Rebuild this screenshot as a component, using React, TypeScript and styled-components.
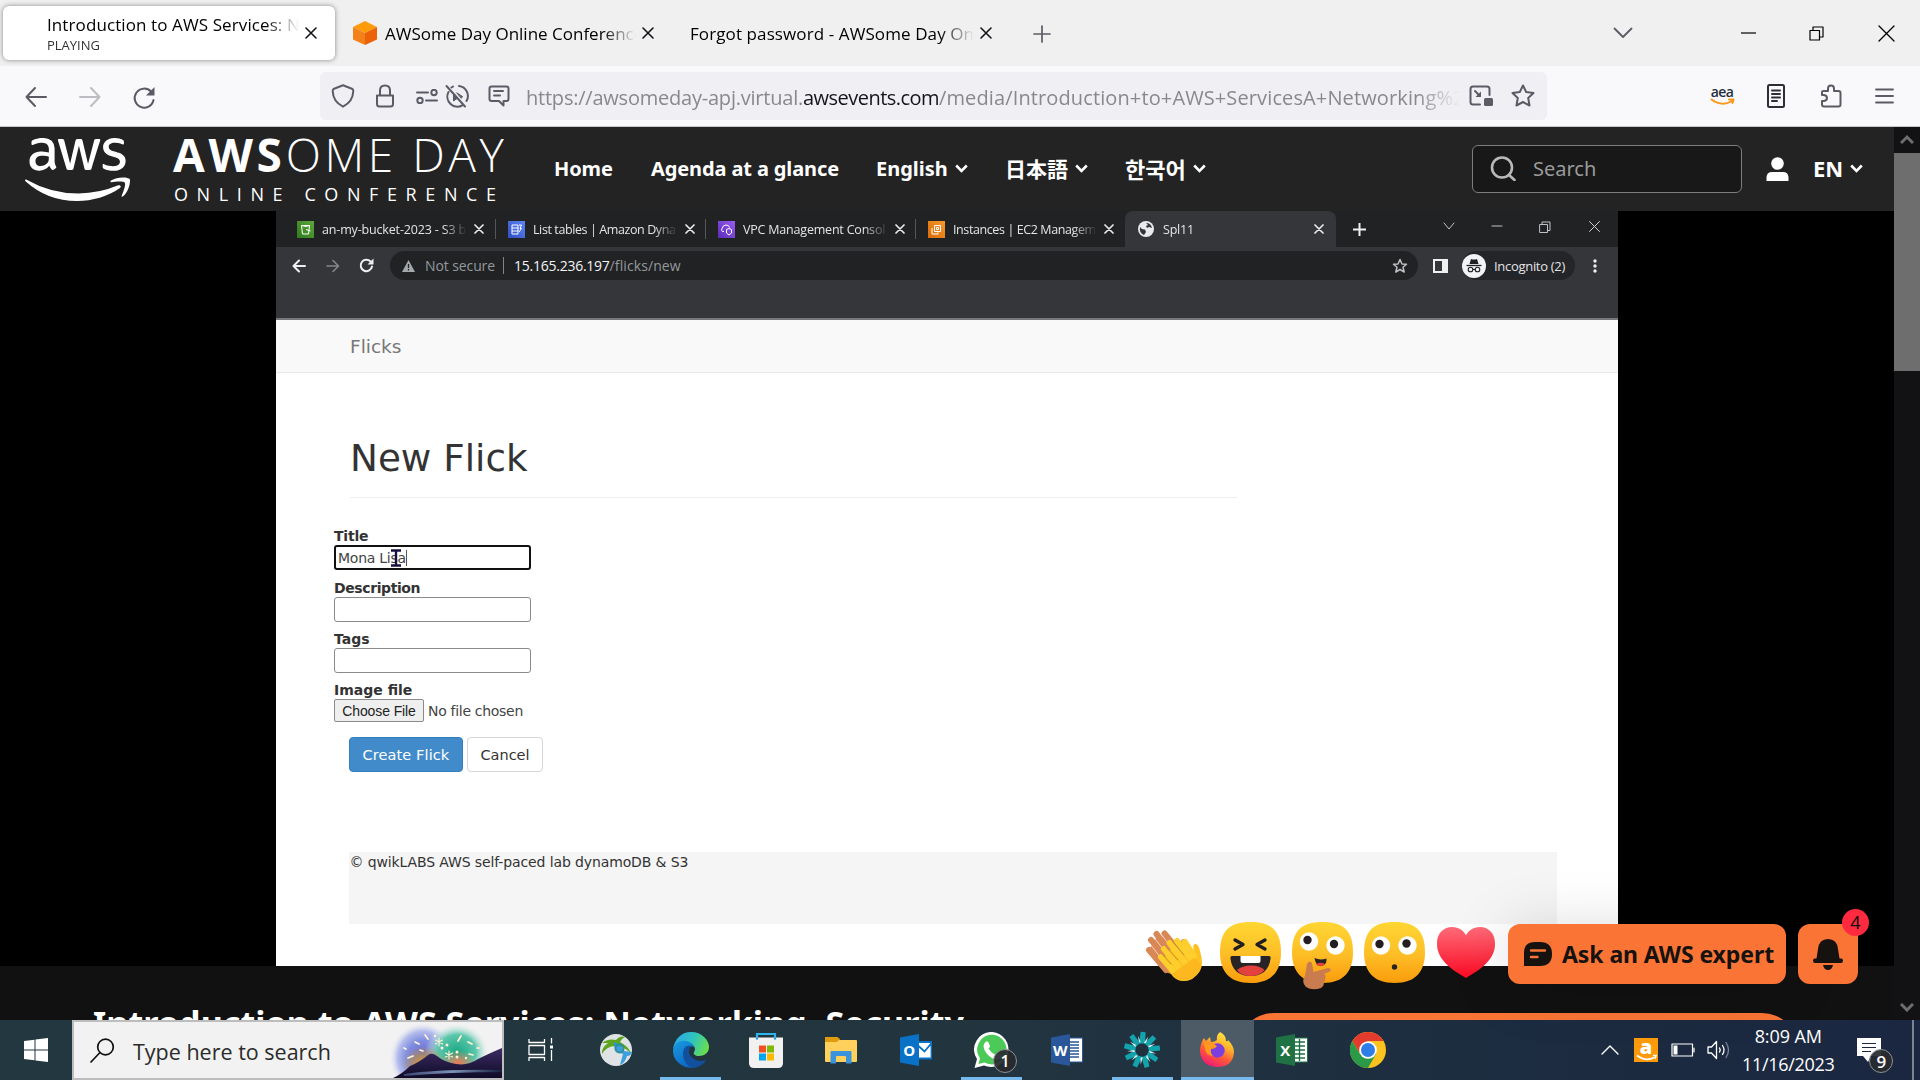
import React from 'react';
import styled, { createGlobalStyle, css } from 'styled-components';
import { FaAws } from 'react-icons/fa';

const ui = `"Open Sans", "Noto Sans", sans-serif`;
const ember = `"Noto Sans", "Open Sans", "Noto Sans CJK JP", "Noto Sans CJK KR", sans-serif`;
const verdana = `"DejaVu Sans", sans-serif`;

const Global = createGlobalStyle`
  * { box-sizing: border-box; }
  html, body { margin: 0; padding: 0; background: #111; overflow: hidden; }
  svg { display: block; flex: none; }
`;

const Screen = styled.div`
  position: relative;
  display: flex;
  flex-direction: column;
  width: 1920px;
  height: 1080px;
  overflow: hidden;
  font-family: ${ui};
`;

const Text = styled.span<{ $size: number; $ls?: number; $color?: string; $weight?: number; $font?: string }>`
  display: block;
  flex: none;
  white-space: nowrap;
  font-family: ${(p) => p.$font ?? ui};
  font-size: ${(p) => p.$size}px;
  letter-spacing: ${(p) => p.$ls ?? 0}px;
  color: ${(p) => p.$color ?? '#000'};
  font-weight: ${(p) => p.$weight ?? 400};
`;

/* Width-limited text that fades out on its right edge. */
const Fade = styled.div<{ $w: number; $fade: number }>`
  flex: none;
  width: ${(p) => p.$w}px;
  overflow: hidden;
  mask-image: linear-gradient(to left, transparent, #000 ${(p) => p.$fade}px);
`;

const IconCell = styled.div<{ $w: number; $ml?: number; $pt?: number }>`
  flex: none;
  display: flex;
  align-items: center;
  justify-content: center;
  width: ${(p) => p.$w}px;
  margin-left: ${(p) => p.$ml ?? 0}px;
  padding-top: ${(p) => p.$pt ?? 0}px;
`;

/* ---------- Firefox chrome ---------- */

const TabStrip = styled.div`
  flex: none;
  display: flex;
  align-items: center;
  height: 66px;
  background: #f0f0f0;
`;

const FxTab = styled.div<{ $active?: boolean; $ml: number; $pl: number }>`
  flex: none;
  display: flex;
  align-items: center;
  height: 54px;
  margin-left: ${(p) => p.$ml}px;
  padding-left: ${(p) => p.$pl}px;
  border-radius: 6px;
  ${(p) =>
    p.$active &&
    css`
      width: 332px;
      background: #fff;
      box-shadow: 0 0 5px rgba(0, 0, 0, 0.45);
    `}
`;

const TabLines = styled.div`
  display: flex;
  flex-direction: column;
  & > *:first-child { line-height: 24px; margin-top: -1px; }
  & > *:last-child { line-height: 16px; }
`;

const FxToolbar = styled.div`
  flex: none;
  display: flex;
  align-items: center;
  height: 61px;
  background: #f9f9fb;
  border-bottom: 1px solid #c4c8c8;
`;

const UrlBar = styled.div`
  flex: none;
  display: flex;
  align-items: center;
  width: 1227px;
  height: 48px;
  margin-left: 164px;
  border-radius: 6px;
  background: #f0f0f4;
`;

const UrlText = styled.div`
  display: flex;
  padding-top: 3px;
  line-height: 30px;
`;

const AeaMark = styled.div`
  display: flex;
  flex-direction: column;
  align-items: center;
  padding-bottom: 1px;
  span { line-height: 12px; }
`;

/* ---------- AWS page ---------- */

const PageArea = styled.div`
  flex: none;
  display: flex;
  height: 893px;
`;

const Page = styled.main`
  display: flex;
  flex-direction: column;
  width: 1894px;
  overflow: hidden;
  background: #000;
`;

const ScrollTrack = styled.div`
  display: flex;
  flex-direction: column;
  justify-content: space-between;
  width: 26px;
  background: #121215;
`;

const ScrollEnd = styled.div`
  display: flex;
  align-items: center;
  justify-content: center;
  height: 26px;
`;

const ScrollThumb = styled.div`
  height: 218px;
  margin-bottom: auto;
  background: #6e6e6e;
`;

const SiteHeader = styled.header`
  flex: none;
  display: flex;
  align-items: center;
  height: 84px;
  background: #232323;
`;

const Wordmark = styled.div`
  display: flex;
  flex-direction: column;
  gap: 4px;
  width: 380px;
  margin-left: 43px;
  padding-bottom: 5px;
`;

const WordTop = styled.div`
  display: flex;
  height: 50px;
  line-height: 50px;
`;

const WordBottom = styled.div`
  height: 22px;
  padding-left: 1px;
  line-height: 22px;
`;

const NavItem = styled.a<{ $w: number; $ml: number }>`
  flex: none;
  display: flex;
  align-items: center;
  gap: 7px;
  width: ${(p) => p.$w}px;
  margin-left: ${(p) => p.$ml}px;
  padding-bottom: 2px;
  color: #fff;
`;

const SearchBox = styled.div`
  flex: none;
  display: flex;
  align-items: center;
  gap: 17px;
  width: 270px;
  height: 48px;
  margin-left: 264px;
  padding: 0 0 2px 17px;
  border: 1px solid #7d7d7d;
  border-radius: 6px;
  background: #181818;
`;

const VideoStage = styled.section`
  flex: none;
  display: flex;
  height: 755px;
  padding-left: 276px;
  background: #000;
`;

const Video = styled.div`
  display: flex;
  flex-direction: column;
  width: 1342px;
  background: #fff;
`;

const BelowVideo = styled.section`
  flex: 1;
  display: flex;
  align-items: flex-start;
  overflow: hidden;
  background: #111;
`;

const SessionTitle = styled.div`
  width: 1144px;
  padding: 34px 0 0 93px;
  line-height: 46px;
`;

const SessionButton = styled.div`
  flex: none;
  width: 560px;
  height: 72px;
  margin: 47px 0 0 94px;
  border-radius: 36px;
  background: #fa7535;
`;

/* ---------- Video contents: Chrome window ---------- */

const CrTabs = styled.div`
  flex: none;
  display: flex;
  align-items: center;
  height: 36px;
  padding-left: 9px;
  background: #202224;
`;

const CrTab = styled.div<{ $w: number }>`
  flex: none;
  display: flex;
  align-items: center;
  width: ${(p) => p.$w}px;
  height: 100%;
  padding-left: 12px;
`;

const CrSeparator = styled.div<{ $hide?: boolean }>`
  width: 1px;
  height: 20px;
  margin-left: auto;
  background: ${(p) => (p.$hide ? 'transparent' : '#55575a')};
`;

const CrActiveTab = styled.div`
  flex: none;
  display: flex;
  align-items: center;
  width: 211px;
  height: 100%;
  padding-left: 13px;
  border-radius: 8px 8px 0 0;
  background: #35363a;
`;

const CrToolbar = styled.div`
  flex: none;
  display: flex;
  align-items: flex-start;
  height: 73px;
  padding-top: 4px;
  background: #35363a;
  border-bottom: 2px solid #77787a;
  & > * { height: 29px; }
`;

const Omnibox = styled.div`
  flex: none;
  display: flex;
  align-items: center;
  width: 1028px;
  margin-left: 12px;
  border-radius: 15px;
  background: #202224;
`;

const OmniDivider = styled.div`
  width: 1px;
  height: 17px;
  margin: 0 10px 0 8px;
  background: #808387;
`;

const IncognitoChip = styled.div`
  flex: none;
  display: flex;
  align-items: center;
  gap: 8px;
  width: 113px;
  margin-left: 14px;
  border-radius: 15px;
  background: #242528;
`;

const FlicksBar = styled.div`
  flex: none;
  height: 53px;
  padding-left: 74px;
  line-height: 53px;
  background: #f9f9f9;
  border-bottom: 1px solid #e9e9e9;
`;

const FlickBody = styled.div`
  display: flex;
  flex-direction: column;
  padding-left: 58px;
`;

const FlickHeading = styled.h1`
  width: 887px;
  height: 125px;
  margin: 0 0 28px 16px;
  padding-top: 60px;
  border-bottom: 1px solid #eee;
  font: inherit;
  line-height: 50px;
`;

const FieldGroup = styled.label<{ $h: number }>`
  display: flex;
  flex-direction: column;
  height: ${(p) => p.$h}px;
  line-height: 20px;
`;

const FieldBox = styled.div<{ $focus?: boolean }>`
  display: flex;
  align-items: center;
  width: 197px;
  height: 25px;
  margin-top: -1px;
  padding-left: 2px;
  border: ${(p) => (p.$focus ? '2px solid #111' : '1px solid #8a8a8a')};
  border-radius: 3px;
`;

const Caret = styled.i`
  width: 1px;
  height: 16px;
  background: #555;
`;

const CursorMark = styled.div`
  position: relative;
  width: 0;
  svg { position: absolute; left: -17px; top: -9px; }
`;

const FileRow = styled.div`
  display: flex;
  align-items: center;
  gap: 4px;
  margin-top: -1px;
`;

const FileButton = styled.div`
  display: flex;
  align-items: center;
  justify-content: center;
  width: 90px;
  height: 23px;
  border: 1px solid #8b8b8b;
  border-radius: 2px;
  background: #efefef;
`;

const FormActions = styled.div`
  display: flex;
  gap: 4px;
  margin-left: 15px;
`;

const FormButton = styled.div<{ $primary?: boolean; $w: number }>`
  display: flex;
  align-items: center;
  justify-content: center;
  width: ${(p) => p.$w}px;
  height: 35px;
  border: 1px solid ${(p) => (p.$primary ? '#357ebd' : '#d6d6d6')};
  border-radius: 4px;
  background: ${(p) => (p.$primary ? '#428bca' : '#fff')};
`;

const FlickFooter = styled.footer`
  width: 1208px;
  height: 72px;
  margin: 80px 0 0 15px;
  padding-left: 0.5px;
  background: #f5f5f5;
  line-height: 20px;
`;

/* ---------- Floating reactions ---------- */

const Reactions = styled.div`
  position: absolute;
  left: 1144px;
  top: 922px;
  display: flex;
  align-items: flex-start;
`;

const Reaction = styled.div<{ $w: number; $ml: number }>`
  width: ${(p) => p.$w}px;
  margin-left: ${(p) => p.$ml}px;
`;

const AskButton = styled.div`
  display: flex;
  align-items: center;
  gap: 10px;
  width: 278px;
  height: 60px;
  margin: 2px 0 0 12px;
  padding-left: 16px;
  border-radius: 12px;
  background: #fa7535;
  box-shadow: 0 4px 60px rgba(0, 0, 0, 0.15);
`;

const BellButton = styled.div`
  position: relative;
  display: flex;
  align-items: center;
  justify-content: center;
  width: 60px;
  height: 60px;
  margin: 2px 0 0 12px;
  border-radius: 12px;
  background: #fa7535;
`;

const BellBadge = styled.div`
  position: absolute;
  right: -11px;
  top: -15px;
  width: 27px;
  height: 27px;
  border-radius: 50%;
  background: #ff2a3f;
  line-height: 27px;
  text-align: center;
`;

/* ---------- Windows taskbar ---------- */

const Taskbar = styled.div`
  flex: none;
  display: flex;
  height: 60px;
  background: linear-gradient(90deg, #22373f 0%, #22353f 50%, #1d2d40 75%, #1b2741 100%);
`;

const StartButton = styled.div`
  display: flex;
  align-items: center;
  justify-content: center;
  width: 72px;
`;

const TaskSearch = styled.div`
  flex: none;
  display: flex;
  align-items: center;
  width: 432px;
  border: 2px solid #bdbdbd;
  background: #f2f2f2;
  padding-left: 16px;
`;

const SearchHint = styled.div`
  width: 259px;
  margin-left: 18px;
  padding-top: 2px;
`;

const TaskItem = styled.div<{ $active?: boolean; $running?: boolean }>`
  flex: none;
  position: relative;
  display: flex;
  align-items: center;
  justify-content: center;
  width: 73px;
  margin-right: 2.2px;
  background: ${(p) => (p.$active ? '#4d5b66' : 'transparent')};
  box-shadow: ${(p) => (p.$active ? 'inset 0 -3px #76b9ed' : 'none')};
  &::after {
    content: '';
    display: ${(p) => (p.$running ? 'block' : 'none')};
    position: absolute;
    left: 6px;
    right: 6px;
    bottom: 0;
    height: 3px;
    background: #76b9ed;
  }
`;

const CountBadge = styled.div<{ $x: number; $y: number }>`
  position: absolute;
  left: ${(p) => p.$x}px;
  top: ${(p) => p.$y}px;
  display: flex;
  align-items: center;
  justify-content: center;
  width: 24px;
  height: 24px;
  border: 1px solid #8d9194;
  border-radius: 50%;
  background: rgba(40, 43, 46, 0.93);
`;

const Clock = styled.div`
  display: flex;
  flex-direction: column;
  align-items: center;
  width: 110px;
  margin-left: 2px;
  padding-top: 2px;
  line-height: 28px;
`;

const Notifications = styled.div`
  position: relative;
  width: 24px;
  margin: 18px 0 0 14px;
`;

const ShowDesktop = styled.div`
  width: 8px;
  margin-left: auto;
  border-left: 2px solid #7b8290;
`;

/* ---------- Icons ---------- */

type StrokeProps = { w: number; h?: number; c?: string; sw?: number; children: React.ReactNode; cap?: 'round' | 'butt' };
const Ico = ({ w, h = w, c = '#5b5b66', sw = 2, children, cap = 'round' }: StrokeProps) => (
  <svg width={w} height={h} viewBox={`0 0 ${w} ${h}`} fill="none" stroke={c} strokeWidth={sw} strokeLinecap={cap} strokeLinejoin="round">
    {children}
  </svg>
);

const CloseX = ({ s = 12, c = '#15141a', sw = 1.6 }: { s?: number; c?: string; sw?: number }) => (
  <Ico w={s} c={c} sw={sw}><path d={`M1 1L${s - 1} ${s - 1}M${s - 1} 1L1 ${s - 1}`} /></Ico>
);

const MenuCaret = () => <Ico w={13} h={9} c="#fff" sw={2.6} cap="butt"><path d="M1.2 1.5L6.5 6.8L11.8 1.5" strokeLinejoin="miter" /></Ico>;

const AwsCube = () => (
  <svg width="24" height="24" viewBox="0 0 24 24">
    <path d="M12 0L24 6L12 12L0 6Z" fill="#ff9a0a" />
    <path d="M0 6L12 12V24L0 18.5Z" fill="#f4801a" />
    <path d="M24 6L12 12V24L24 18.5Z" fill="#ec6208" />
  </svg>
);

const Service = ({ a, b, children }: { a: string; b: string; children: React.ReactNode }) => (
  <svg width="17" height="17" viewBox="0 0 17 17" fill="none" stroke="#fff" strokeWidth="1" strokeLinejoin="round">
    <defs>
      <linearGradient id={`g${a.slice(1)}`} x1="0" y1="1" x2="1" y2="0"><stop stopColor={a} /><stop offset="1" stopColor={b} /></linearGradient>
    </defs>
    <rect width="17" height="17" fill={`url(#g${a.slice(1)})`} stroke="none" />
    {children}
  </svg>
);

const Clap = () => (
  <svg width="60" height="61" viewBox="0 0 60 61">
    <path d="M6 26L12 16L24 14L38 30L30 52Q22 52 18 46Z" fill="#d98855" />
    <g stroke="#d98855" strokeWidth="6" strokeLinecap="round">
      <path d="M20.500 11.500L34 28M12.500 12L32 36M7 18L24 38M5 28L22 48M40 20L42 28" />
    </g>
    <g stroke="#fff" strokeWidth="0.900" strokeLinecap="round" opacity="0.700"><path d="M16 11L28 26M9.500 15L23 32M6 22L17 36" /></g>
    <path d="M30 22L48 37Q51 34 49.500 27Q48.500 22 51.500 22Q54.500 22 56 29Q60 42 56 49Q49 60 38 59Q31 58 27 52L18 40Z" fill="#fdc120" />
    <g stroke="#fdce2c" strokeWidth="6" strokeLinecap="round">
      <path d="M41 20L50 34M33 19L48 38M25.500 21L42 42M20 27L36 47M17 35L32 52" />
    </g>
    <path d="M28 52L50 36L57 42Q57 47 54 51Q47 59 39 59Q32 58 28 52Z" fill="#fcb81e" />
    <g stroke="#c98a2c" strokeWidth="1" strokeLinecap="round"><path d="M29 20L40 33M22 25L34 38M17 31L27 42" /></g>
  </svg>
);

const FacePath = 'M30.500 0C52 0 61 9 61 30.500C61 49 52 61 30.500 61C9 61 0 49 0 30.500C0 9 9 0 30.500 0Z';
const FaceGradient = ({ id }: { id: string }) => (
  <defs><linearGradient id={id} x1="0" y1="0" x2="0" y2="1"><stop stopColor="#ffd632" /><stop offset="0.500" stopColor="#fdc028" /><stop offset="1" stopColor="#fb9c0c" /></linearGradient></defs>
);

const Laugh = () => (
  <svg width="61" height="61" viewBox="0 0 61 61">
    <FaceGradient id="f1" />
    <path d={FacePath} fill="url(#f1)" />
    <path d="M15 18L23 22.500L15 27M45 18L37 22.500L45 27" fill="none" stroke="#231f20" strokeWidth="3.400" strokeLinecap="round" strokeLinejoin="round" />
    <path d="M12 34H49Q51 34 50.500 37Q48 54 30.500 54Q13 54 10.500 37Q10 34 12 34Z" fill="#282324" />
    <path d="M17 48Q22 43.500 31 43.500Q40 43.500 44.500 48Q40 54 30.500 54Q21 54 17 48Z" fill="#e2413f" />
    <path d="M20.500 34H40.500V39Q40.500 41 38.500 41H22.500Q20.500 41 20.500 39Z" fill="#fff" />
  </svg>
);

const Think = () => (
  <svg width="61" height="68" viewBox="0 0 61 68">
    <FaceGradient id="f2" />
    <path d={FacePath} fill="url(#f2)" />
    <circle cx="17" cy="19.500" r="9.200" fill="#fff" /><circle cx="15.500" cy="18" r="4.200" fill="#231f20" />
    <circle cx="43.500" cy="23.500" r="9.200" fill="#fff" /><circle cx="42" cy="22" r="4.200" fill="#231f20" />
    <path d="M22.500 36Q28 38.500 34.500 36.500Q35 44 28 44Q23.500 43 22.500 36Z" fill="#282324" />
    <path d="M24 42Q29 39.500 33 42Q31 44.500 28 44.300Q25 44 24 42Z" fill="#e2413f" />
    <path d="M15 42Q17 38 20 41L21.500 50L36 46Q40 46 38 49.500L32 52Q35 54 33 56Q34 59 31.500 60Q33 63 29 66Q20 69 14 65Q9 60 13 54Z" fill="#c97c4e" />
  </svg>
);

const Hush = () => (
  <svg width="61" height="61" viewBox="0 0 61 61">
    <FaceGradient id="f3" />
    <path d={FacePath} fill="url(#f3)" />
    <circle cx="17" cy="23.500" r="9.200" fill="#fff" /><circle cx="15.500" cy="22" r="4.200" fill="#231f20" />
    <circle cx="43.500" cy="23.500" r="9.200" fill="#fff" /><circle cx="42.500" cy="21.500" r="4.200" fill="#231f20" />
    <circle cx="30.500" cy="45" r="2.700" fill="#282324" />
  </svg>
);

const Heart = () => (
  <svg width="60" height="61" viewBox="0 0 60 61">
    <defs><linearGradient id="hg" x1="0" y1="0" x2="0" y2="1"><stop stopColor="#ff6a78" /><stop offset="1" stopColor="#fb0a22" /></linearGradient></defs>
    <path d="M30 56C22 51 0 40 1 21C1 11 8 5 16 5C23 5 28 9 30 13.500C32 9 37 5 44 5C52 5 59 11 59 21C60 40 38 51 30 56Z" fill="url(#hg)" />
  </svg>
);

const Fireworks = () => (
  <svg width="112" height="56" viewBox="0 0 112 56">
    <defs>
      <radialGradient id="w1"><stop stopColor="#5a5fd0" /><stop offset="0.500" stopColor="#8290e0" /><stop offset="0.750" stopColor="#b4bdec" /><stop offset="1" stopColor="#f2f2f2" stopOpacity="0" /></radialGradient>
      <radialGradient id="w2"><stop stopColor="#1aa884" /><stop offset="0.600" stopColor="#5cc7ac" /><stop offset="1" stopColor="#f2f2f2" stopOpacity="0" /></radialGradient>
      <radialGradient id="w3"><stop stopColor="#d09a45" /><stop offset="0.400" stopColor="#c8963f" stopOpacity="0.800" /><stop offset="1" stopColor="#c8963f" stopOpacity="0" /></radialGradient>
      <radialGradient id="w6"><stop stopColor="#f07a55" /><stop offset="1" stopColor="#f07a55" stopOpacity="0" /></radialGradient>
      <linearGradient id="w4" x1="0" y1="0" x2="0" y2="1"><stop stopColor="#3d2c63" /><stop offset="1" stopColor="#0e0b28" /></linearGradient>
      <linearGradient id="w5"><stop stopColor="#3a4470" /><stop offset="0.500" stopColor="#7f93b8" /><stop offset="1" stopColor="#14203f" /></linearGradient>
    </defs>
    <ellipse cx="33" cy="36" rx="34" ry="36" fill="url(#w1)" />
    <ellipse cx="67" cy="30" rx="32" ry="29" fill="url(#w2)" />
    <ellipse cx="34" cy="42" rx="22" ry="18" fill="url(#w3)" />
    <ellipse cx="68" cy="41" rx="18" ry="13" fill="url(#w6)" />
    <path d="M3 56Q12 52 20 44Q30 40 38 33Q42 30 47 34Q54 40 66 42Q78 44 88 37Q98 32 112 26V56Z" fill="url(#w4)" />
    <path d="M14 52Q50 47 112 48V50Q60 50 14 54Z" fill="url(#w5)" />
    <g stroke="#fff3d8" strokeWidth="1.700" strokeLinecap="round">
      <path d="M35 13L38 17M25 20L29 22M14 26L16 27M30 28L33 29M18 36L23 34M71 14L68 19M78 20L82 22M87 26L89 26M79 32L83 33" />
      <path d="M59 29V37M55.500 31L62.500 35M62.500 31L55.500 35M49 16V24M45.500 18L52.500 22M52.500 18L45.500 22" strokeWidth="1.100" />
    </g>
    <g fill="#fff3d8"><circle cx="57" cy="23" r="1.500" /><circle cx="52" cy="26" r="1.500" /><circle cx="67" cy="30" r="1.500" /><circle cx="67" cy="35" r="1.500" /><circle cx="76" cy="36" r="1.200" /><circle cx="45" cy="14" r="1.200" /></g>
  </svg>
);

const TaskView = () => (
  <Ico w={25} h={24} c="#fff" sw={1.3} cap="butt"><path d="M1 1V4.500H16.500V1M1 7.500H16.500V16.500H1ZM1 23V19.500H16.500V23M23.500 0V5.500M23.500 12V23" /><path d="M22 7.500h3v3h-3z" fill="#fff" stroke="none" /></Ico>
);

const AnyConnect = () => (
  <svg width="32" height="32" viewBox="0 0 32 32">
    <circle cx="16" cy="16" r="16" fill="#dfe3e6" />
    <path d="M2 9Q8 4 16 6Q20 1 25 3Q21 5 20 8Q28 12 31 19Q22 11 15 12Q7 12 2 20Q1 14 8 9Z" fill="#5da51f" />
    <path d="M14 12Q15 18 23 20L20 31Q25 29 27 22Q31 22 32 18L24 17Q21 10 14 8Z" fill="#2b97dc" opacity="0.900" />
    <circle cx="19.500" cy="14.500" r="4" fill="none" stroke="#2d8f9c" strokeWidth="2" />
  </svg>
);

const Edge = () => (
  <svg width="36" height="36" viewBox="0 0 36 36">
    <defs>
      <linearGradient id="e1" x1="0" y1="0.300" x2="1" y2="0.600"><stop stopColor="#2ba9e8" /><stop offset="0.500" stopColor="#2ec3c0" /><stop offset="1" stopColor="#6be04a" /></linearGradient>
      <linearGradient id="e2" x1="0" y1="0" x2="0.600" y2="1"><stop stopColor="#1a9be0" /><stop offset="1" stopColor="#0a66c4" /></linearGradient>
    </defs>
    <path d="M0 17C2 6 9 0 18 0C29 0 36 8 36 15C36 21 31 24 26 24C22 24 20 22 21 20C23 18 22 13 17 11C10 8 3 12 0 17Z" fill="url(#e1)" />
    <path d="M0 18C1 11 7 8 13 9C18 10 21 13 21 15C17 12 12 19 14 26C16 32 22 35 25 34.500C20 37 12 36 7 32C2 28 0 24 0 18Z" fill="url(#e2)" />
    <path d="M11 17C8 24 12 34 20 35.800C26 35.500 31 32 33.500 27.500C28 31 18 28 16 21C15.500 18 17 15 18.500 14C15 13 12 14 11 17Z" fill="#124f9c" />
  </svg>
);

const Store = () => (
  <svg width="36" height="36" viewBox="0 0 36 36">
    <path d="M9 7V2H27V7" fill="none" stroke="#2bb4ee" strokeWidth="2.200" />
    <path d="M1 5.500H35V31Q35 36 30 36H6Q1 36 1 31Z" fill="#f1f1f1" />
    <path d="M9 5.500V7.500M27 5.500V7.500" stroke="#1590d8" strokeWidth="2.200" />
    <path fill="#f25022" d="M11 13.500h7v7h-7z" /><path fill="#7fba00" d="M19 13.500h7v7h-7z" /><path fill="#00a4ef" d="M11 21.500h7v7h-7z" /><path fill="#ffb900" d="M19 21.500h7v7h-7z" />
  </svg>
);

const Explorer = () => (
  <svg width="32" height="27" viewBox="0 0 32 27">
    <path d="M0 1Q0 0 1 0H12L15 3H31Q32 3 32 4V24Q32 25 31 25H1Q0 25 0 24Z" fill="#ffd15c" />
    <path d="M0 1Q0 0 1 0H12L15 2L12 5H0Z" fill="#e09b0a" />
    <path d="M5.500 26.500V15Q5.500 14 6.500 14H25.500Q26.500 14 26.500 15V26.500H21V20Q21 19 20 19H12Q11 19 11 20V26.500Z" fill="#3a94dc" />
  </svg>
);

const OfficeIcon = ({ letter, c, side }: { letter: string; c: string; side: React.ReactNode }) => (
  <svg width="32" height="32" viewBox="0 0 32 32">
    {side}
    <path d="M0 3.500L19 0V32L0 28.500Z" fill={c} />
    <text x="9.300" y="21.500" textAnchor="middle" fontFamily="Open Sans, sans-serif" fontWeight="700" fontSize="15" fill="#fff">{letter}</text>
  </svg>
);

const WhatsApp = () => (
  <svg width="36" height="36" viewBox="0 0 36 36">
    <path d="M18.500 0A17.500 17.500 0 1 1 10 33.500L0.500 36L3 27A17.500 17.500 0 0 1 18.500 0Z" fill="#fff" />
    <path d="M18.500 2.800A14.800 14.800 0 1 1 10.500 30.500L4.500 32L6 26.300A14.800 14.800 0 0 1 18.500 2.800Z" fill="#4bca58" />
    <path d="M12 9.500Q14 9 14.500 10.500L16 14Q16 15 14.500 16.500Q17 21 21.500 23Q23 21 24 21.200L27.500 23Q28 27 23.500 27.500Q18 27.500 13 22Q9.500 18 9.500 14Q9.800 11 12 9.500Z" fill="#fff" />
  </svg>
);

const Burst = () => (
  <svg width="38" height="38" viewBox="-19 -19 38 38">
    {[0, 1, 2, 3, 4, 5, 6, 7, 8].map((i) => (
      <g key={i} transform={`rotate(${i * 40 + 4})`}>
        <path d="M-3.200 -6L-2.600 -18H2.400L2.600 -7Z" fill="#12a3ad" />
        <path d="M-3.500 -6L-4.800 -14L-2 -8Z" fill="#e8f4f4" />
      </g>
    ))}
  </svg>
);

const Firefox = () => (
  <svg width="34" height="36" viewBox="0 0 34 36">
    <defs>
      <linearGradient id="x1" x1="0.800" y1="0" x2="0.300" y2="1"><stop stopColor="#fff04a" /><stop offset="0.350" stopColor="#ffb52b" /><stop offset="0.650" stopColor="#ff5a36" /><stop offset="1" stopColor="#f0197a" /></linearGradient>
    </defs>
    <path d="M20 0Q26 3 26 9Q28 10 28 8Q34 14 34 20Q33 35 17 35Q1 34 0 19Q0 12 4 6L6 9L10 5L11 10Q15 10 17 8Q16 3 20 0Z" fill="url(#x1)" />
    <circle cx="17.500" cy="18.500" r="7.200" fill="#7b3fe0" />
    <path d="M4 11Q11 9 17 14Q15 17 11 17Q10 21 13 24Q5 23 5 16Z" fill="#ff9a1f" />
  </svg>
);

const Chrome = () => (
  <svg width="36" height="36" viewBox="0 0 36 36">
    <circle cx="18" cy="18" r="18" fill="#fcc31e" />
    <path d="M18 18V9H33.600A18 18 0 0 0 2.400 9L9 20Z" fill="#e33b2e" />
    <path d="M2.400 9A18 18 0 0 0 18 36L26 22L18 18L10 22Z" fill="#2a9a48" />
    <circle cx="18" cy="18" r="8.800" fill="#fff" /><circle cx="18" cy="18" r="7" fill="#2f7de9" />
  </svg>
);

const services = [
  { title: 'an-my-bucket-2023 - S3 b', tab: 211, w: 145, ls: -0.16, a: '#2f7a1c', b: '#5da83a', glyph: <path d="M4.500 4.500H12.500L11.500 13H5.500ZM4.500 4.500Q8.500 6.500 12.500 4.500M9 8.500L13.500 10" /> },
  { title: 'List tables | Amazon Dyna', tab: 210, w: 145, ls: -0.4, a: '#2f4fc4', b: '#5f84f5', glyph: <path d="M4 4H10V13H4ZM4 7H10M4 10H10M11 4H13.500L12 7.500H13.500L11 11" /> },
  { title: 'VPC Management Consol', tab: 210, w: 145, ls: -0.2, a: '#5a2bb8', b: '#9a5cf0', glyph: <path d="M6 10.500H4.500Q3 9.500 4 7.500Q5 4 8 4Q11 4 11.500 6.500M8.500 8.500L11 7.500L13.500 8.500V12L11 14L8.500 12Z" /> },
  { title: 'Instances | EC2 Managem', tab: 209, w: 144, ls: -0.4, a: '#d96a0a', b: '#f79a2a', glyph: <path d="M6.500 4.500H12.500V10.500H6.500ZM8.500 6.500H10.500V8.500H8.500ZM4 7V13H10V11.500" /> },
];

const nav = [
  { label: 'Home', w: 60, ml: 1, size: 20, ls: -0.1 },
  { label: 'Agenda at a glance', w: 189, ml: 37, size: 20, ls: -0.12 },
  { label: 'English', w: 92, ml: 36, size: 20, ls: 0, menu: true },
  { label: '日本語', w: 83, ml: 37, size: 21, ls: 0, menu: true },
  { label: '한국어', w: 83, ml: 37, size: 22, ls: 0, menu: true },
];

export default function App() {
  return (
    <Screen>
      <Global />
      <TabStrip>
        <FxTab $active $ml={3} $pl={44}>
          <Fade $w={252} $fade={34}>
            <TabLines>
              <Text $size={17} $ls={0.1}>Introduction to AWS Services: N</Text>
              <Text $size={13} $color="#333">PLAYING</Text>
            </TabLines>
          </Fade>
          <IconCell $w={24}><CloseX /></IconCell>
        </FxTab>
        <FxTab $ml={18} $pl={0}>
          <AwsCube />
          <IconCell $w={8} />
          <Fade $w={251} $fade={34}><Text $size={17}>AWSome Day Online Conference</Text></Fade>
          <IconCell $w={24}><CloseX /></IconCell>
        </FxTab>
        <FxTab $ml={30} $pl={0}>
          <Fade $w={284} $fade={34}><Text $size={17} $ls={0.1}>Forgot password - AWSome Day On</Text></Fade>
          <IconCell $w={24}><CloseX /></IconCell>
        </FxTab>
        <IconCell $w={24} $ml={32} $pt={1}><Ico w={18} sw={1.7}><path d="M9 1V17M1 9H17" /></Ico></IconCell>
        <IconCell $w={24} $ml={557}><Ico w={20} h={12} sw={1.8}><path d="M1.500 1.500L10 10L18.500 1.500" /></Ico></IconCell>
        <IconCell $w={24} $ml={101}><Ico w={15} h={2} c="#000" sw={1.2} cap="butt"><path d="M0 1H15" /></Ico></IconCell>
        <IconCell $w={24} $ml={44}><Ico w={15} h={15} c="#000" sw={1.2}><path d="M1 4.500H10.500V14H1ZM4 4V1H14V11H11" /></Ico></IconCell>
        <IconCell $w={24} $ml={46}><CloseX s={17} c="#000" sw={1.3} /></IconCell>
      </TabStrip>

      <FxToolbar>
        <IconCell $w={24} $ml={24} $pt={2}><Ico w={22}><path d="M21 11H1.500M10 2L1.500 11L10 20" /></Ico></IconCell>
        <IconCell $w={24} $ml={30} $pt={2}><Ico w={22} c="#bcbcc3"><path d="M1 11H20.500M12 2L20.500 11L12 20" /></Ico></IconCell>
        <IconCell $w={24} $ml={30} $pt={3}><Ico w={24}><path d="M21.500 14A9.500 9.500 0 1 1 19 5.500" /><path d="M22.500 1V9.500H14Z" fill="#5b5b66" stroke="none" /></Ico></IconCell>
        <UrlBar>
          <IconCell $w={24} $ml={11}><Ico w={24}><path d="M12 1.300L21.500 5Q22.300 5.500 22.300 7Q22 17.500 12 22.700Q2 17.500 1.700 7Q1.700 5.500 2.500 5Z" /></Ico></IconCell>
          <IconCell $w={24} $ml={18}><Ico w={20} h={24}><path d="M2 11.500H18V20Q18 22.500 15.500 22.500H4.500Q2 22.500 2 20ZM5 11V6.500Q5 1.500 10 1.500Q15 1.500 15 6.500V11" /></Ico></IconCell>
          <IconCell $w={24} $ml={18}><Ico w={22} h={15}><path d="M1 3.500H12M10 11.500H21" /><circle cx="18" cy="3.500" r="2.700" /><circle cx="4" cy="11.500" r="2.700" /></Ico></IconCell>
          <IconCell $w={26} $ml={5}><Ico w={24}><path d="M3.500 8A10 10 0 0 0 17 21.500M14 2A10 10 0 0 1 21.500 17M6.500 3.500L8 2.500" /><path d="M1.500 2L20 22.500" /><path d="M12 9L17.500 12.500L16.500 14ZM8.500 10V17L12 14.500Z" fill="#5b5b66" stroke="#5b5b66" strokeWidth="1" /></Ico></IconCell>
          <IconCell $w={24} $ml={17}><Ico w={22}><path d="M3.500 1.500H18.500Q20.500 1.500 20.500 3.500V14Q20.500 16 18.500 16H15.500V20.500L11 16H3.500Q1.500 16 1.500 14V3.500Q1.500 1.500 3.500 1.500ZM6 6H15M6 10.500H12" /></Ico></IconCell>
          <IconCell $w={15} />
          <Fade $w={934} $fade={44}>
            <UrlText>
              <Text $size={20} $color="#88888d" $ls={-0.22}>https://awsomeday-apj.virtual.</Text>
              <Text $size={20} $color="#15141a" $ls={-0.53}>awsevents.com</Text>
              <Text $size={20} $color="#88888d" $ls={0.12}>/media/Introduction+to+AWS+ServicesA+Networking%2</Text>
            </UrlText>
          </Fade>
          <IconCell $w={24} $ml={9} $pt={2}><Ico w={24}><path d="M11 19.500H4Q1.500 19.500 1.500 17V4Q1.500 1.500 4 1.500H18Q20.500 1.500 20.500 4V10" /><path d="M6 6L11 11" /><path d="M12 6.500V12H6.500Z" fill="#5b5b66" stroke="none" /><rect x="15" y="13" width="9" height="8" rx="1.500" fill="#5b5b66" stroke="none" /></Ico></IconCell>
          <IconCell $w={24} $ml={18}><Ico w={24}><path d="M12 1.500L15.200 8L22.500 9L17.200 14L18.500 21.500L12 18L5.500 21.500L6.800 14L1.500 9L8.800 8Z" /></Ico></IconCell>
        </UrlBar>
        <IconCell $w={26} $ml={162}>
          <AeaMark>
            <Text $size={14} $weight={600} $color="#232f3e" $ls={-0.6}>aea</Text>
            <Ico w={25} h={8} c="#f7981d" sw={2}><path d="M1.500 1.500Q12 9 22 3M19 1.500L23.500 1.500L22.500 5" /></Ico>
          </AeaMark>
        </IconCell>
        <IconCell $w={24} $ml={29}><Ico w={18} h={24} c="#2e2e36"><rect x="1" y="1" width="16" height="22" rx="1.500" /><path d="M5 6.500H13M5 10H13M5 13.500H13M5 17H10" /></Ico></IconCell>
        <IconCell $w={24} $ml={31}><Ico w={22} h={24}><path d="M4 22.500Q2 22.500 2 20.500V17H4Q7 16.500 7 14Q7 11.500 4 11H2V8Q2 7 3.500 7H8V4.500Q8 1.500 11 1.500Q14 1.500 14 4.500V7H18.500Q20.500 7 20.500 9V20.500Q20.500 22.500 18.500 22.500Z" /></Ico></IconCell>
        <IconCell $w={24} $ml={29}><Ico w={19} h={16} sw={1.8}><path d="M1 1.500H18M1 8H18M1 14.500H18" /></Ico></IconCell>
      </FxToolbar>

      <PageArea>
        <Page>
          <SiteHeader>
            <IconCell $w={106} $ml={24}><FaAws size={105} color="#fff" /></IconCell>
            <Wordmark>
              <WordTop>
                <Text $size={46} $weight={700} $color="#fff" $ls={3.7}>AWS</Text>
                <Text $size={46} $weight={300} $color="#fff" $ls={3.6}>OME DAY</Text>
              </WordTop>
              <WordBottom><Text $size={18} $color="#fff" $ls={8.6}>ONLINE CONFERENCE</Text></WordBottom>
            </Wordmark>
            {nav.map((n) => (
              <NavItem key={n.label} $w={n.w} $ml={n.ml}>
                <Text $font={ember} $size={n.size} $weight={700} $color="#fff" $ls={n.ls}>{n.label}</Text>
                {n.menu && <MenuCaret />}
              </NavItem>
            ))}
            <SearchBox>
              <Ico w={26} c="#b9b9b9" sw={2.6}><circle cx="12" cy="12.500" r="10" /><path d="M19 20L24.500 25" /></Ico>
              <Text $font={ember} $size={20} $color="#9b9b9b">Search</Text>
            </SearchBox>
            <IconCell $w={24} $ml={23}><svg width="23" height="24" viewBox="0 0 23 24" fill="#fff"><circle cx="11.500" cy="6.500" r="6.300" /><path d="M0.500 24V20Q1 15 6 15H17Q22 15 22.500 20V24Z" /></svg></IconCell>
            <NavItem $w={60} $ml={24}><Text $font={ember} $size={22} $weight={700} $color="#fff">EN</Text><MenuCaret /></NavItem>
          </SiteHeader>

          <VideoStage>
            <Video>
              <CrTabs>
                {services.map((s, i) => (
                  <CrTab key={s.title} $w={s.tab}>
                    <Service a={s.a} b={s.b}>{s.glyph}</Service>
                    <IconCell $w={8} />
                    <Fade $w={s.w} $fade={24}><Text $size={12.5} $ls={s.ls} $color="#e3e4e6">{s.title}</Text></Fade>
                    <IconCell $w={24}><CloseX s={10} c="#e8eaed" sw={1.7} /></IconCell>
                    <CrSeparator $hide={i === 3} />
                  </CrTab>
                ))}
                <CrActiveTab>
                  <svg width="16" height="16" viewBox="0 0 16 16"><circle cx="8" cy="8" r="8" fill="#e8eaed" /><path d="M2 6Q4 9 7 8.500L8 11L6 14Q1 12 2 6ZM8 2Q13 2 14 7L11 6L9 7L8 5L10 4Z" fill="#35363a" /></svg>
                  <IconCell $w={9} />
                  <Fade $w={144} $fade={10}><Text $size={12.5} $ls={-0.2} $color="#e3e4e6">Spl11</Text></Fade>
                  <IconCell $w={24}><CloseX s={10} c="#e8eaed" sw={1.7} /></IconCell>
                </CrActiveTab>
                <IconCell $w={24} $ml={11}><Ico w={13} c="#f0f0f0" sw={2}><path d="M6.500 0.500V12.500M0.500 6.500H12.500" /></Ico></IconCell>
                <IconCell $w={24} $ml={66}><Ico w={12} h={14} c="#c0c2c5" sw={1}><path d="M1 1L6 7L11 1" /></Ico></IconCell>
                <IconCell $w={24} $ml={24}><Ico w={12} h={8} c="#c0c2c5" sw={1}><path d="M1 1H11" /></Ico></IconCell>
                <IconCell $w={24} $ml={24}><Ico w={12} h={17} c="#c0c2c5" sw={1}><path d="M1 3.500H8.500V11.500H1ZM3 3V1H11V9.500H9" /></Ico></IconCell>
                <IconCell $w={24} $ml={25}><Ico w={11} h={18} c="#d0d2d5" sw={1}><path d="M0.500 1.500L10.500 11.500M10.500 1.500L0.500 11.500" /></Ico></IconCell>
              </CrTabs>
              <CrToolbar>
                <IconCell $w={24} $ml={11}><Ico w={14} c="#f0f0f0"><path d="M13 7H1.500M7 1.500L1.500 7L7 12.500" /></Ico></IconCell>
                <IconCell $w={24} $ml={10}><Ico w={14} c="#85878b" sw={1.6}><path d="M1 7H12.500M7 1.500L12.500 7L7 12.500" /></Ico></IconCell>
                <IconCell $w={24} $ml={9}><Ico w={15} c="#f0f0f0"><path d="M13 8.500A5.700 5.700 0 1 1 11.500 3.500" /><path d="M14.500 0.500V6.500H8.500Z" fill="#f0f0f0" stroke="none" /></Ico></IconCell>
                <Omnibox>
                  <IconCell $w={16} $ml={10}><svg width="13" height="12" viewBox="0 0 13 12"><path d="M6.500 0L13 12H0Z" fill="#a5a8ac" /><path d="M6.500 4V8M6.500 9V10.500" stroke="#202224" strokeWidth="1.300" /></svg></IconCell>
                  <IconCell $w={9} />
                  <Text $size={14} $ls={-0.1} $color="#95989c">Not secure</Text>
                  <OmniDivider />
                  <Text $size={14} $ls={-0.25} $color="#f3f4f5">15.165.236.197</Text>
                  <Text $size={14} $ls={0.1} $color="#95989c">/flicks/new</Text>
                  <IconCell $w={16} $ml={711}><Ico w={16} c="#bfc1c4" sw={1.5}><path d="M8 1.500L10 6L14.500 6.300L11 9.300L12.200 14L8 11.500L3.800 14L5 9.300L1.500 6.300L6 6Z" /></Ico></IconCell>
                </Omnibox>
                <IconCell $w={16} $ml={14}><svg width="15" height="14" viewBox="0 0 15 14"><path d="M0 0H15V14H0ZM2 2V12H9V2Z" fill="#f0f0f0" fillRule="evenodd" /></svg></IconCell>
                <IncognitoChip>
                  <svg width="24" height="24" viewBox="0 0 24 24"><circle cx="12" cy="12" r="12" fill="#f1f3f4" /><path d="M9 5L10.500 5.500H13.500L15 5L16.500 10H7.500Z" fill="#202124" /><path d="M4.500 11.500H19.500" stroke="#202124" strokeWidth="1.300" /><g fill="none" stroke="#202124" strokeWidth="1.100"><circle cx="8.500" cy="15.500" r="2.300" /><circle cx="15.500" cy="15.500" r="2.300" /><path d="M10.800 15.500H13.200" /></g></svg>
                  <Text $size={13} $ls={-0.3} $color="#e3e4e6">Incognito (2)</Text>
                </IncognitoChip>
                <IconCell $w={10} $ml={15}><svg width="4" height="14" viewBox="0 0 4 14" fill="#f0f0f0"><circle cx="2" cy="2" r="1.700" /><circle cx="2" cy="7" r="1.700" /><circle cx="2" cy="12" r="1.700" /></svg></IconCell>
              </CrToolbar>

              <FlicksBar><Text $font={verdana} $size={18.5} $color="#777">Flicks</Text></FlicksBar>
              <FlickBody>
                <FlickHeading><Text $font={verdana} $size={37.3} $color="#333">New Flick</Text></FlickHeading>
                <FieldGroup $h={51.5}>
                  <Text $font={verdana} $size={14} $ls={-0.2} $weight={700} $color="#333">Title</Text>
                  <FieldBox $focus>
                    <Text $font={verdana} $size={14} $ls={-0.25} $color="#444">Mona Lisa</Text>
                    <Caret />
                    <CursorMark><Ico w={12} h={18} c="#1a1040" sw={2.4} cap="butt"><path d="M1 1.500H11M6 1.500V16.500M1 16.500H11" /></Ico></CursorMark>
                  </FieldBox>
                </FieldGroup>
                <FieldGroup $h={51.3}><Text $font={verdana} $size={14} $ls={-0.4} $weight={700} $color="#333">Description</Text><FieldBox /></FieldGroup>
                <FieldGroup $h={51.3}><Text $font={verdana} $size={14} $weight={700} $color="#333">Tags</Text><FieldBox /></FieldGroup>
                <FieldGroup $h={57}>
                  <Text $font={verdana} $size={14} $weight={700} $color="#333">Image file</Text>
                  <FileRow>
                    <FileButton><Text $font={`"Liberation Sans", sans-serif`} $size={14} $ls={-0.1} $color="#222">Choose File</Text></FileButton>
                    <Text $font={verdana} $size={14} $ls={-0.3} $color="#444">No file chosen</Text>
                  </FileRow>
                </FieldGroup>
                <FormActions>
                  <FormButton $primary $w={114}><Text $font={verdana} $size={14.5} $ls={0.1} $color="#fff">Create Flick</Text></FormButton>
                  <FormButton $w={76}><Text $font={verdana} $size={14.5} $color="#333">Cancel</Text></FormButton>
                </FormActions>
                <FlickFooter><Text $font={verdana} $size={14} $ls={-0.12} $color="#333">© qwikLABS AWS self-paced lab dynamoDB &amp; S3</Text></FlickFooter>
              </FlickBody>
            </Video>
          </VideoStage>

          <BelowVideo>
            <SessionTitle><Text $font={ember} $size={34} $ls={0.05} $weight={700} $color="#fff">Introduction to AWS Services: Networking, Security</Text></SessionTitle>
            <SessionButton />
          </BelowVideo>
        </Page>
        <ScrollTrack>
          <ScrollEnd><Ico w={14} h={13} c="#6e6e6e" sw={3} cap="butt"><path d="M1 9L7 3L13 9" strokeLinejoin="miter" /></Ico></ScrollEnd>
          <ScrollThumb />
          <ScrollEnd><Ico w={14} h={9} c="#6e6e6e" sw={3} cap="butt"><path d="M1 1L7 7L13 1" strokeLinejoin="miter" /></Ico></ScrollEnd>
        </ScrollTrack>
      </PageArea>

      <Reactions>
        <Reaction $w={60} $ml={0}><Clap /></Reaction>
        <Reaction $w={61} $ml={15.5}><Laugh /></Reaction>
        <Reaction $w={61} $ml={11}><Think /></Reaction>
        <Reaction $w={61} $ml={11}><Hush /></Reaction>
        <Reaction $w={60} $ml={11.5}><Heart /></Reaction>
        <AskButton>
          <svg width="28" height="24" viewBox="0 0 28 24"><path d="M0 11Q0 0 11 0H16Q28 0 28 12Q28 24 16 24H0Z" fill="#151210" /><path d="M7 8.500H21M7 15H13.500" stroke="#fa7535" strokeWidth="2.400" strokeLinecap="round" /></svg>
          <Text $font={ember} $size={23} $ls={-0.08} $weight={700} $color="#151210">Ask an AWS expert</Text>
        </AskButton>
        <BellButton>
          <svg width="30" height="31" viewBox="0 0 30 31" fill="#151210"><path d="M15 0Q24 0 25 10L26.500 19.500H28.500Q30 20 30 21.500Q30 24 28 24H2Q0 24 0 21.500Q0 20 1.500 19.500H3.500L5 10Q6 0 15 0ZM10 26H20Q19 31 15 31Q11 31 10 26Z" /></svg>
          <BellBadge><Text $font={ember} $size={18} $color="#151210">4</Text></BellBadge>
        </BellButton>
      </Reactions>

      <Taskbar>
        <StartButton><svg width="24" height="24" viewBox="0 0 24 24" fill="#fff"><path d="M0 3L10.500 1.700V11.500H0ZM11.500 1.500L24 0V11.500H11.500ZM0 12.500H10.500V22.300L0 21ZM11.500 12.500H24V24L11.500 22.500Z" /></svg></StartButton>
        <TaskSearch>
          <Ico w={25} c="#111" sw={1.7}><circle cx="15.500" cy="9" r="7.800" /><path d="M10 14.500L1 24" /></Ico>
          <SearchHint><Text $size={21.5} $color="#2b2b2b">Type here to search</Text></SearchHint>
          <IconCell $w={112}><Fireworks /></IconCell>
        </TaskSearch>
        <TaskItem><TaskView /></TaskItem>
        <TaskItem><AnyConnect /></TaskItem>
        <TaskItem $running><Edge /></TaskItem>
        <TaskItem><Store /></TaskItem>
        <TaskItem><Explorer /></TaskItem>
        <TaskItem><OfficeIcon letter="O" c="#0a72c6" side={<><path d="M17 8H32V24.500H17Z" fill="#fff" /><path d="M17 8H31.500V24.500H17M18.500 12L24.500 17.500L32 8.500" fill="none" stroke="#0a72c6" strokeWidth="1.800" /></>} /></TaskItem>
        <TaskItem $running><WhatsApp /><CountBadge $x={38} $y={29}><Text $size={16} $weight={600} $color="#fff">1</Text></CountBadge></TaskItem>
        <TaskItem><OfficeIcon letter="W" c="#2a569a" side={<><path d="M17 4H31.500V28H17Z" fill="#fff" stroke="#2a569a" /><path d="M17 8H28M17 11H28M17 14H28M17 17H28M17 20H28M17 23H28" stroke="#2a569a" strokeWidth="1.400" /></>} /></TaskItem>
        <TaskItem $running><Burst /></TaskItem>
        <TaskItem $active><Firefox /></TaskItem>
        <TaskItem><OfficeIcon letter="X" c="#1f7244" side={<><path d="M17 4H31.500V28H17Z" fill="#fff" stroke="#1f7244" /><path d="M17 8H29M17 12H29M17 16H29M17 20H29M17 24H29M23.500 5V27" stroke="#1f7244" strokeWidth="1.400" /></>} /></TaskItem>
        <TaskItem><Chrome /></TaskItem>
        <IconCell $w={24} $ml={192}><Ico w={18} h={10} c="#fff" sw={1.4}><path d="M1 9L9 1L17 9" /></Ico></IconCell>
        <IconCell $w={24} $ml={12}><svg width="24" height="24" viewBox="0 0 24 24"><rect width="24" height="24" fill="#fd9a0a" /><text x="12" y="16" textAnchor="middle" fontFamily="Open Sans, sans-serif" fontWeight="800" fontSize="20" fill="#fff">a</text><path d="M3 17.500Q12 24 20 19.500M19 17.500L22 17.500L21 20.500" fill="none" stroke="#fff" strokeWidth="1.700" /></svg></IconCell>
        <IconCell $w={24} $ml={13}><Ico w={24} h={14} c="#fff" sw={1.2}><path d="M1 1H21.500V13H1ZM23 5V9" /><path d="M2.500 2.500H6.500V11.500H2.500Z" fill="#fff" stroke="none" /></Ico></IconCell>
        <IconCell $w={24} $ml={12}><Ico w={24} h={20} c="#fff" sw={1.3}><path d="M1 7V13H4.500L9.500 18.500V1.500L4.500 7ZM12.500 8Q14 10 12.500 12M15.500 5.500Q18.500 10 15.500 14.500" /><path d="M19 2.500Q24 10 19 17.500" stroke="#7d8492" /></Ico></IconCell>
        <Clock>
          <Text $size={18} $ls={-0.1} $color="#fff">8:09 AM</Text>
          <Text $size={18} $ls={-0.3} $color="#fff">11/16/2023</Text>
        </Clock>
        <Notifications>
          <svg width="24" height="24" viewBox="0 0 24 24"><path d="M0 0H24V18H14L11 24L6 18H0Z" fill="#fff" /><path d="M5 5.500H19M5 9.500H19M5 13.500H14" stroke="#1b2741" strokeWidth="1.200" /></svg>
          <CountBadge $x={12} $y={11}><Text $size={17} $weight={600} $color="#fff">9</Text></CountBadge>
        </Notifications>
        <ShowDesktop />
      </Taskbar>
    </Screen>
  );
}
